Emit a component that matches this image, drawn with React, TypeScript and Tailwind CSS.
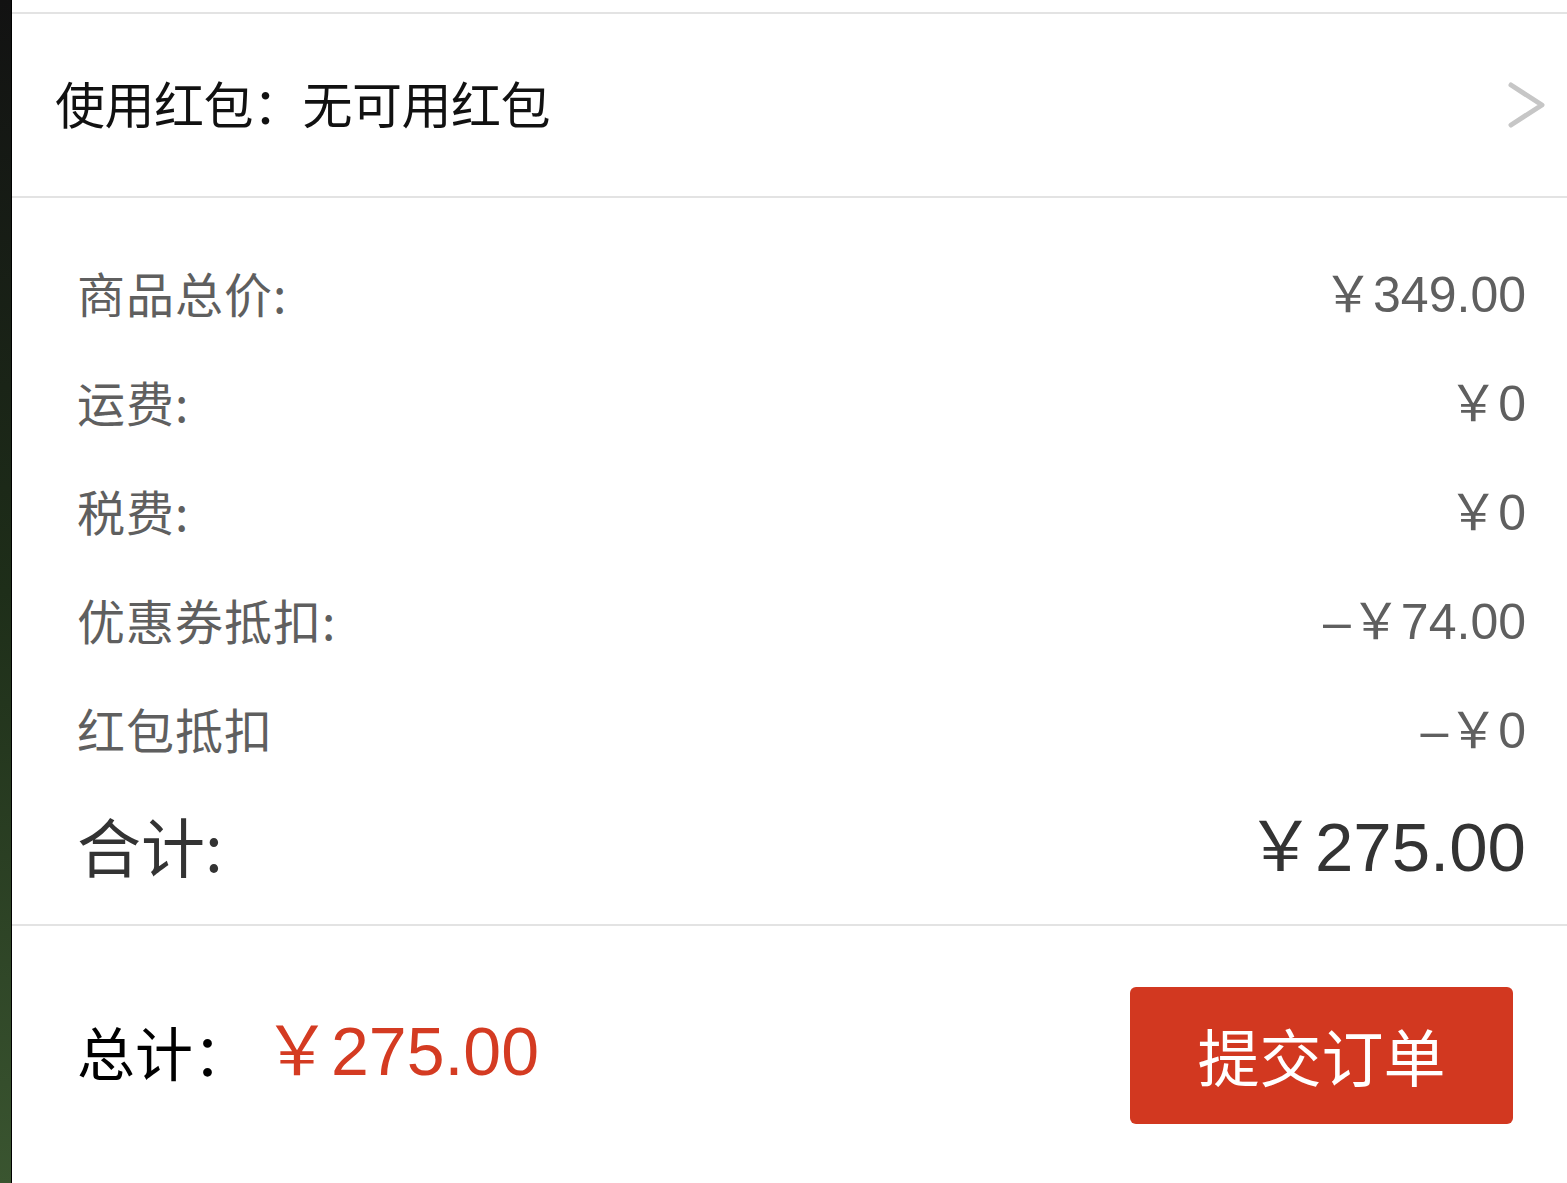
import React from 'react';

const font = { fontFamily: '"Noto Sans CJK SC", "Noto Sans", sans-serif' };
const num = { fontFamily: '"Liberation Sans", "Noto Sans CJK SC", sans-serif' };

const rows = [
  { label: '商品总价:', value: '￥349.00' },
  { label: '运费:', value: '￥0' },
  { label: '税费:', value: '￥0' },
  { label: '优惠券抵扣:', value: '–￥74.00' },
  { label: '红包抵扣', value: '–￥0' },
];

const Chevron = () => (
  <svg width="40" height="48" viewBox="0 0 40 48" fill="none" className="shrink-0">
    <polyline
      points="4,4 35,24 4,44"
      stroke="#c6c6c6"
      strokeWidth="5"
      strokeLinecap="round"
      strokeLinejoin="round"
    />
  </svg>
);

export default function App() {
  return (
    <div className="flex min-h-[1183px] w-full bg-white" style={font}>
      <div className="w-[12px] shrink-0 bg-gradient-to-b from-[#121212] via-[#1e2e19] to-[#3a5530] border-r border-black" />
      <div className="flex-1 flex flex-col bg-white pt-[12px]">
        {/* red packet */}
        <div className="h-[186px] border-y-2 border-[#e3e3e3] flex items-center justify-between pl-[43px] pr-[20px]">
          <span className="text-[50px] text-[#111] tracking-[-0.5px] -mt-[6px]">使用红包：无可用红包</span>
          <Chevron />
        </div>

        {/* price breakdown */}
        <div className="pt-[39px] pb-[12px] pl-[65px] pr-[41px] border-b-2 border-[#e3e3e3]">
          {rows.map((r) => (
            <div key={r.label} className="h-[109px] flex items-center justify-between text-[#5f5f5f]">
              <span className="text-[48px] tracking-[1px]">{r.label}</span>
              <span className="text-[50px] mt-[8px]" style={num}>{r.value}</span>
            </div>
          ))}
          <div className="h-[130px] flex items-center justify-between text-[#333]">
            <span className="text-[64px] -mt-[6px]">合计:</span>
            <span className="text-[69px] mt-[2px]" style={num}>￥275.00</span>
          </div>
        </div>

        {/* submit */}
        <div className="flex items-center justify-between pl-[65px] pr-[54px] h-[258px]">
          <div className="flex items-center gap-[12px] -mt-[8px]">
            <span className="text-[58px] text-black">总计：</span>
            <span className="text-[68px] text-[#d43b22]" style={num}>￥275.00</span>
          </div>
          <button className="w-[383px] h-[137px] rounded-[6px] bg-[#d23820] text-white text-[62px] flex items-center justify-center">
            提交订单
          </button>
        </div>
      </div>
    </div>
  );
}
